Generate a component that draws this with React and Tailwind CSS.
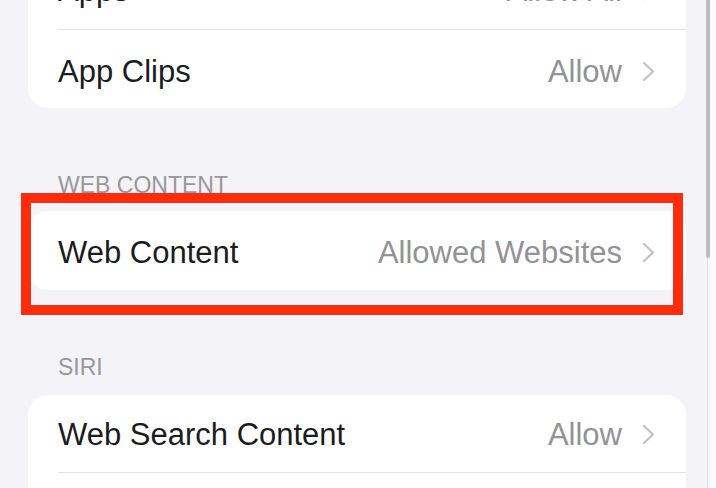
import React from "react";

function Chevron() {
  return (
    <svg width="13" height="21" viewBox="0 0 13 21" className="shrink-0">
      <polyline points="2,2 11,10.5 2,19" fill="none" stroke="#c4c4c8" strokeWidth="2.4" strokeLinecap="round" strokeLinejoin="round" />
    </svg>
  );
}

function Row({ label, value, h = "h-[78px]", pad = "" }) {
  return (
    <div className={`flex items-center justify-between pl-[30px] pr-[31px] ${h} ${pad}`}>
      <span className="text-[31px] leading-none text-[#1c1c1e]">{label}</span>
      <div className="flex items-center gap-[20px]">
        <span className="text-[31px] leading-none text-[#929297]">{value}</span>
        <Chevron />
      </div>
    </div>
  );
}

function Sep() {
  return <div className="ml-[30px] h-px bg-[#e3e3e7]" />;
}

function Header({ children, cls }) {
  return (
    <div className={`pl-[58px] text-[23px] leading-none text-[#97979c] ${cls}`}>{children}</div>
  );
}

export default function App() {
  return (
    <div
      className="relative h-[488px] w-[716px] overflow-hidden bg-[#f3f3f8]"
      style={{ fontFamily: '"Liberation Sans", Arial, sans-serif' }}
    >
      <div className="flex flex-col">
        <div className="ml-[28px] mt-[-49px] w-[658px] rounded-[20px] bg-white">
          <Row label="Apps" value="Allow All" />
          <Sep />
          <Row label="App Clips" value="Allow" pad="pt-[5px]" />
        </div>
        <Header cls="mt-[66px]">WEB CONTENT</Header>
        <div className="ml-[28px] mt-[14px] w-[658px] rounded-[20px] bg-white">
          <Row label="Web Content" value="Allowed Websites" h="h-[79px]" pad="pt-[3px]" />
        </div>
        <Header cls="mt-[66px]">SIRI</Header>
        <div className="ml-[28px] mt-[16px] w-[658px] rounded-[20px] bg-white">
          <Row label="Web Search Content" value="Allow" h="h-[77px]" pad="pt-[2px]" />
          <Sep />
          <div className="h-[78px]" />
        </div>
      </div>

      {/* red annotation box */}
      <div className="absolute left-[21px] top-[193px] h-[122px] w-[662px] border-[10px] border-[#fe2b0c]" />

      {/* scrollbar */}
      <div className="absolute right-0 top-0 h-full w-[6px] bg-[#fafafc]" />
      <div className="absolute left-[706px] top-0 h-[258px] w-[4px] rounded-b-full bg-[#bcbcc1]" />
      <div className="absolute left-[707px] top-[258px] h-[230px] w-px bg-[#e4e4e8]" />
    </div>
  );
}
